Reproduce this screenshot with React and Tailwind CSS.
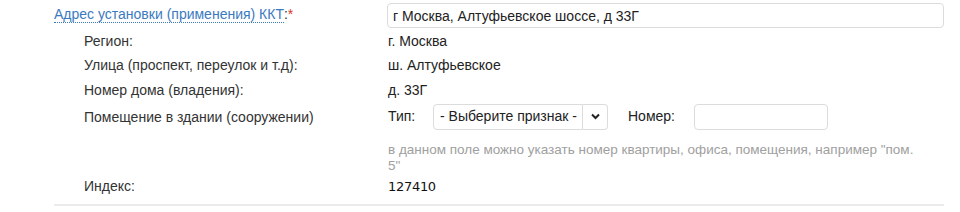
import React from 'react';

const Row = ({ label, children, className = '' }) => (
  <div className={`flex items-center h-[24.5px] ${className}`}>
    <div className="w-[304px] shrink-0 text-[14px] text-[#333]">{label}</div>
    <div className="text-[14px] text-[#222]">{children}</div>
  </div>
);

const App = () => {
  return (
    <div className="w-[960px] h-[212px] bg-white font-['Liberation_Sans',Arial,sans-serif]">
      <div className="ml-[54px] w-[890px] pt-[3px]">
        <div className="flex items-center">
          <div className="w-[333px] shrink-0 text-[14px] pb-[2px]">
            <span className="text-[#3b7ac0] border-b border-dotted border-[#3b7ac0]">
              Адрес установки (применения) ККТ
            </span>
            <span className="text-[#333]">:</span>
            <span className="text-[#d9342b]">*</span>
          </div>
          <input
            type="text"
            defaultValue="г Москва, Алтуфьевское шоссе, д 33Г"
            className="flex-1 h-[25px] border border-[#dcdcdc] rounded-[4px] px-[5px] text-[14px] text-[#222] outline-none"
          />
        </div>

        <div className="pl-[30px] pt-[1px]">
          <Row label="Регион:">г. Москва</Row>
          <Row label="Улица (проспект, переулок и т.д):">ш. Алтуфьевское</Row>
          <Row label="Номер дома (владения):">д. 33Г</Row>
          <div className="flex pt-[1px]">
            <div className="w-[304px] shrink-0 text-[14px] text-[#333] pt-[3px]">Помещение в здании (сооружении)</div>
            <div className="flex items-start">
              <span className="text-[14px] text-[#222] w-[45px] pt-[2px]">Тип:</span>
              <div className="flex h-[26px]">
                <div className="w-[150px] border border-[#dcdcdc] rounded-l-[4px] flex items-center pl-[6px] text-[14px] text-[#222]">
                  - Выберите признак -
                </div>
                <div className="w-[25px] border border-l-0 border-[#dcdcdc] rounded-r-[4px] flex items-center justify-center">
                  <svg width="9" height="7" viewBox="0 0 9 7">
                    <path d="M1 1.5 L4.5 5 L8 1.5" fill="none" stroke="#222" strokeWidth="2" />
                  </svg>
                </div>
              </div>
              <span className="text-[14px] text-[#222] ml-[20px] w-[66px] pt-[2px]">Номер:</span>
              <div className="w-[134px] h-[26px] border border-[#dcdcdc] rounded-[4px]" />
            </div>
          </div>
          <div className="flex pt-[12px]">
            <div className="w-[304px] shrink-0" />
            <div className="w-[540px] text-[13.5px] leading-[16px] text-[#a0a0a0]">
              в данном поле можно указать номер квартиры, офиса, помещения, например "пом. 5"
            </div>
          </div>
          <div className="flex items-center h-[22px] mt-[2px]">
            <div className="w-[304px] shrink-0 text-[14px] text-[#333]">Индекс:</div>
            <div className="text-[13px] text-[#111] font-['DejaVu_Sans',Tahoma,sans-serif] tracking-[-0.3px]">127410</div>
          </div>
        </div>
        <div className="mt-[6px] h-[2px] bg-[#ebebeb]" />
      </div>
    </div>
  );
};

export default App;
